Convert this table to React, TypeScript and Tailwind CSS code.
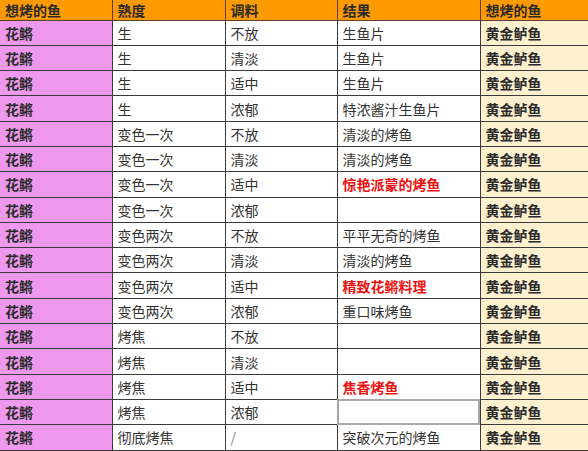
const rows: [string, string, string, boolean?][] = [
  ["生", "不放", "生鱼片"],
  ["生", "清淡", "生鱼片"],
  ["生", "适中", "生鱼片"],
  ["生", "浓郁", "特浓酱汁生鱼片"],
  ["变色一次", "不放", "清淡的烤鱼"],
  ["变色一次", "清淡", "清淡的烤鱼"],
  ["变色一次", "适中", "惊艳派蒙的烤鱼", true],
  ["变色一次", "浓郁", ""],
  ["变色两次", "不放", "平平无奇的烤鱼"],
  ["变色两次", "清淡", "清淡的烤鱼"],
  ["变色两次", "适中", "精致花鳉料理", true],
  ["变色两次", "浓郁", "重口味烤鱼"],
  ["烤焦", "不放", ""],
  ["烤焦", "清淡", ""],
  ["烤焦", "适中", "焦香烤鱼", true],
  ["烤焦", "浓郁", ""],
  ["彻底烤焦", "/", "突破次元的烤鱼"],
];

export default function App() {
  return (
    <div
      className="w-[588px] h-[451px] overflow-hidden bg-[#bdbdbd]"
      style={{ fontFamily: '"Noto Sans CJK SC", "Noto Sans", sans-serif' }}
    >
      <table className="w-[588px] border-collapse table-fixed text-[14px] leading-none">
        <colgroup>
          <col className="w-[112px]" />
          <col className="w-[113px]" />
          <col className="w-[112px]" />
          <col className="w-[143px]" />
          <col className="w-[108px]" />
        </colgroup>
        <thead>
          <tr className="h-[20px] bg-[#ff9a00] text-[#2a2a2a] font-bold">
            <th className="text-left font-bold pl-[5px] border-r border-b border-[#5a4020]">想烤的鱼</th>
            <th className="text-left font-bold pl-[5px] border-r border-b border-[#5a4020]">熟度</th>
            <th className="text-left font-bold pl-[5px] border-r border-b border-[#5a4020]">调料</th>
            <th className="text-left font-bold pl-[5px] border-r border-b border-[#5a4020]">结果</th>
            <th className="text-left font-bold pl-[5px] border-b border-[#5a4020]">想烤的鱼</th>
          </tr>
        </thead>
        <tbody>
          {rows.map(([doneness, sauce, result, red], i) => (
            <tr key={i} className="h-[25.3px]">
              <td className="bg-[#ee99ee] text-[#2a2a2a] font-bold pl-[5px] border-r border-b border-[#3a3a3a]">花鳉</td>
              <td className="bg-white text-[#333] pl-[5px] border-r border-b border-[#3a3a3a]">{doneness}</td>
              <td className={`bg-white pl-[5px] border-r border-b border-[#3a3a3a] ${sauce === "/" ? "text-[#888]" : "text-[#333]"}`}>{sauce}</td>
              <td
                className={`bg-white pl-[5px] border-r border-b border-[#3a3a3a] ${
                  red ? "text-[#ee1111] font-bold" : "text-[#333]"
                } ${i === 15 ? "outline-2 outline-[#a8a8a8] -outline-offset-2" : ""}`}
              >
                {result}
              </td>
              <td className="bg-[#fff0d0] text-[#2a2a2a] font-bold pl-[5px] border-b border-[#3a3a3a]">黄金鲈鱼</td>
            </tr>
          ))}
        </tbody>
      </table>
    </div>
  );
}
